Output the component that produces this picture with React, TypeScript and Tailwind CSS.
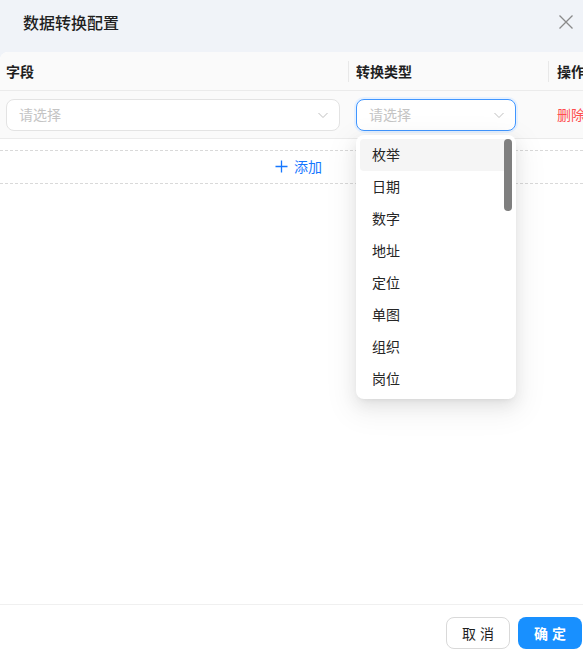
import React from "react";

const font = { fontFamily: '"Noto Sans CJK SC", "Noto Sans", sans-serif' };

function Chevron({ color }: { color: string }) {
  return (
    <svg width="12" height="12" viewBox="0 0 12 12" fill="none">
      <path d="M1.5 4 L6 8.5 L10.5 4" stroke={color} strokeWidth="1" />
    </svg>
  );
}

export default function App() {
  const items = ["枚举", "日期", "数字", "地址", "定位", "单图", "组织", "岗位"];
  return (
    <div className="relative w-[583px] h-[654px] overflow-hidden bg-white" style={font}>
      {/* header */}
      <div className="h-[52px] bg-[#f0f3f8] flex items-center justify-between pl-[23px] pr-[8px] pb-[9px]">
        <span className="text-[16px] font-medium text-[#1f1f1f]">数据转换配置</span>
        <svg width="16" height="16" viewBox="0 0 16 16" className="mr-[1px]">
          <path d="M1.5 1.5 L14.5 14.5 M14.5 1.5 L1.5 14.5" stroke="#8a8a8a" strokeWidth="1.3" />
        </svg>
      </div>
      <div className="bg-[#f0f3f8]">
        <div className="bg-white rounded-tl-[8px]">
          {/* table header */}
          <div className="flex h-[39px] bg-[#fafafa] rounded-tl-[8px] border-b border-[#ebebeb] text-[14px] font-bold text-[#1f1f1f] w-[620px]">
            <div className="w-[348px] flex items-center pl-[6px]">字段</div>
            <div className="w-[200px] flex items-center pl-[8px] relative">
              <span className="absolute left-0 top-[9px] h-[21px] w-px bg-[#e8e8e8]" />
              转换类型
            </div>
            <div className="flex-1 flex items-center pl-[9px] relative">
              <span className="absolute left-0 top-[9px] h-[21px] w-px bg-[#e8e8e8]" />
              操作
            </div>
          </div>
          {/* row */}
          <div className="flex h-[48px] bg-[#fafafa] border-b border-[#ebebeb] w-[620px] items-center text-[14px]">
            <div className="w-[348px] pl-[6px] pr-[8px]">
              <div className="h-[32px] rounded-[8px] border border-[#e3e3e3] bg-white flex items-center justify-between pl-[12px] pr-[10px]">
                <span className="text-[#c4c4c4]">请选择</span>
                <Chevron color="#c0c0c0" />
              </div>
            </div>
            <div className="w-[200px] pl-[8px] pr-[32px]">
              <div className="h-[32px] rounded-[8px] border border-[#4096ff] ring-2 ring-[#e6f1ff] bg-white flex items-center justify-between pl-[12px] pr-[10px]">
                <span className="text-[#c4c4c4]">请选择</span>
                <Chevron color="#c0c0c0" />
              </div>
            </div>
            <div className="flex-1 pl-[9px] text-[#ff4d4f]">删除</div>
          </div>
          {/* add */}
          <div className="mt-[11px] h-[34px] border-y border-dashed border-[#d9d9d9] flex items-center justify-center pl-[14px] pb-[1px] text-[14px] text-[#1677ff] gap-[6px]">
            <svg width="13" height="13" viewBox="0 0 13 13">
              <path d="M6.5 0.5 V12.5 M0.5 6.5 H12.5" stroke="#1677ff" strokeWidth="1.3" />
            </svg>
            <span>添加</span>
          </div>
          <div className="h-[420px]" />
        </div>
      </div>
      {/* footer */}
      <div className="absolute left-0 right-0 top-[604px] h-[50px] border-t border-[#f0f0f0] bg-white flex justify-end items-start pt-[12px] pr-[1px] gap-[8px]">
        <button className="w-[64px] h-[32px] rounded-[8px] border border-[#d9d9d9] bg-white text-[14px] text-[#1f1f1f] tracking-[4px] pl-[4px]">
          取消
        </button>
        <button className="w-[64px] h-[32px] rounded-[8px] bg-[#1890ff] text-[14px] text-white font-bold tracking-[4px] pl-[4px]">
          确定
        </button>
      </div>
      {/* dropdown */}
      <div className="absolute left-[356px] top-[135px] w-[160px] h-[264px] bg-white rounded-[8px] shadow-[0_6px_16px_0_rgba(0,0,0,0.08),0_3px_6px_-4px_rgba(0,0,0,0.12),0_9px_28px_8px_rgba(0,0,0,0.05)] p-[4px] overflow-hidden">
        {items.map((t, i) => (
          <div
            key={t}
            className={
              "h-[32px] flex items-center pl-[12px] pb-[1px] rounded-[4px] text-[14px] text-[#262626] " +
              (i === 0 ? "bg-[#f5f5f5]" : "")
            }
          >
            {t}
          </div>
        ))}
        <div className="absolute left-[148px] top-[4px] w-[8px] h-[72px] rounded-[4px] bg-[#7f7f7f]" />
      </div>
    </div>
  );
}
